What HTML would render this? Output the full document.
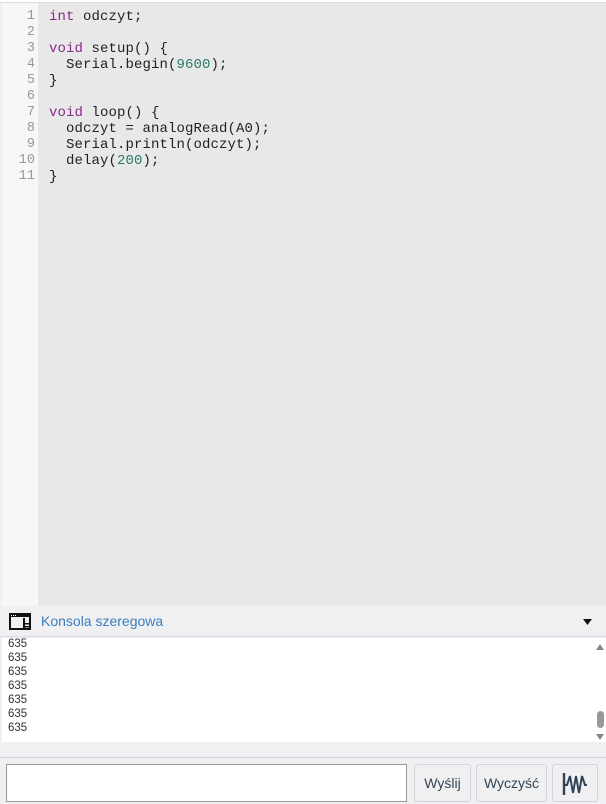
<!DOCTYPE html>
<html><head><style>
*{margin:0;padding:0;box-sizing:border-box}
body{width:606px;height:804px;overflow:hidden;background:#f0f0f2;font-family:"Liberation Sans",sans-serif;position:relative}
#top{position:absolute;left:0;top:0;width:606px;height:3px;background:#fff;border-bottom:1px solid #dcdce4}
#gut{position:absolute;left:2px;top:3px;width:36px;height:603px;background:#f7f7f7}
#code{position:absolute;left:38px;top:3px;width:568px;height:603px;background:#e8e8e8}
pre{font-family:"Liberation Mono",monospace;font-size:14px;line-height:16px;position:absolute;top:6px}
#nums{color:#999;text-align:right;left:0;width:33px;font-size:13.5px}
#src{left:11px;color:#222;font-size:14px;letter-spacing:0.1px}
.k{color:#8a2a8a}.n{color:#2a7a6a}
#hdr{position:absolute;left:0;top:606px;width:606px;height:31px;border-bottom:1px solid #dcdce4;background:#f0f0f2}
#hdr span{position:absolute;left:41px;top:7px;color:#3a7fc0;font-size:14px}
#out{position:absolute;left:2px;top:638px;width:604px;height:104px;background:#fff}
#out pre{font-family:"Liberation Sans",sans-serif;font-size:11.5px;line-height:14px;left:6px;top:-1px;color:#333}
#inp{position:absolute;left:6px;top:764px;width:401px;height:38px;border:1px solid #999;background:#fff}
.b{position:absolute;top:764px;height:38px;border:1px solid #d0d4dc;border-radius:3px;background:#f0f0f2;color:#345;font-size:14px;text-align:center;line-height:36px}
</style></head><body>
<div id="top"></div>
<div id="gut"><pre id="nums">1
2
3
4
5
6
7
8
9
10
11</pre></div>
<div id="code"><pre id="src"><span class="k">int</span> odczyt;

<span class="k">void</span> setup() {
  Serial.begin(<span class="n">9600</span>);
}

<span class="k">void</span> loop() {
  odczyt = analogRead(A0);
  Serial.println(odczyt);
  delay(<span class="n">200</span>);
}</pre></div>
<div id="hdr">
<svg style="position:absolute;left:9px;top:7px" width="22" height="17" viewBox="0 0 22 17"><rect x="1" y="1" width="20" height="15" fill="none" stroke="#111" stroke-width="2"/><rect x="1" y="1" width="20" height="3" fill="#111"/><rect x="2" y="2" width="1" height="1" fill="#fff"/><rect x="4" y="2" width="1" height="1" fill="#fff"/><rect x="6" y="2" width="1" height="1" fill="#fff"/><rect x="14" y="5" width="2" height="11" fill="#111"/><rect x="16" y="10" width="5" height="1.5" fill="#111"/><rect x="16" y="13" width="5" height="1.5" fill="#111"/></svg>
<span>Konsola szeregowa</span>
<svg style="position:absolute;left:583px;top:13px" width="9" height="6"><path d="M0 0H9L4.5 6Z" fill="#111"/></svg>
</div>
<div id="out"><pre>635
635
635
635
635
635
635</pre>
<svg style="position:absolute;left:593px;top:5px" width="10" height="100"><path d="M1 7L5 1L9 7Z" fill="#888"/><rect x="2" y="68" width="7" height="17" rx="3.5" fill="#999"/><path d="M1 91L5 97L9 91Z" fill="#888"/></svg>
</div>
<div style="position:absolute;left:0;top:757px;width:606px;height:1px;background:#d0d4dc"></div>
<div id="inp"></div>
<div class="b" style="left:414px;width:57px">Wyślij</div>
<div class="b" style="left:476px;width:71px">Wyczyść</div>
<div class="b" style="left:552px;width:46px"><svg style="position:absolute;left:9px;top:6px" width="28" height="26" viewBox="0 0 28 26"><path d="M2 2V24" stroke="#2f4356" stroke-width="2.4" fill="none"/><path d="M3 14H5L8 5L11 22L14 5L17 22L20 5L23 14H25" fill="none" stroke="#2f4356" stroke-width="2"/></svg></div>
</body></html>
